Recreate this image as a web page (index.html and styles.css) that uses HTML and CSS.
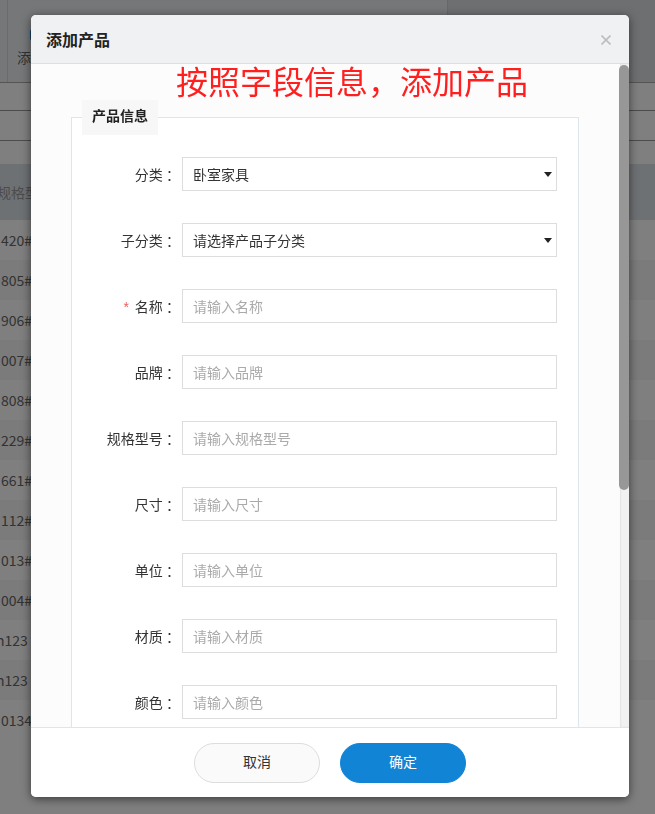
FILE: index.html
```html
<!DOCTYPE html>
<html>
<head>
    <meta charset="utf-8">
    <title>添加产品</title>
    <link rel="stylesheet" href="styles.css">
</head>
<body>
<div class="page">
    <div class="toolbar">
        <div class="tool-group">
            <div class="tool-btn"><span class="tool-icon"></span><span class="tool-text">添加</span></div>
        </div>
        <div class="tool-rest"></div>
    </div>
    <div class="tabs"></div>
    <div class="search"><div class="search-row"></div></div>
    <div class="grid">
        <div class="grid-head">规格型号</div>
        <div class="grid-row">420#</div>
        <div class="grid-row">805#</div>
        <div class="grid-row">906#</div>
        <div class="grid-row">007#</div>
        <div class="grid-row">808#</div>
        <div class="grid-row">229#</div>
        <div class="grid-row">661#</div>
        <div class="grid-row">112#</div>
        <div class="grid-row">013#</div>
        <div class="grid-row">004#</div>
        <div class="grid-row cut">n123</div>
        <div class="grid-row cut">n123</div>
        <div class="grid-row">0134</div>
    </div>
</div>

<div class="mask"></div>

<div class="dialog">
    <div class="dialog-head">
        <span class="dialog-title">添加产品</span>
        <span class="dialog-close">
            <svg width="10" height="10" viewBox="0 0 10 10"><path d="M0.5 0.5L9.5 9.5M9.5 0.5L0.5 9.5" stroke="#bdbdbd" stroke-width="1.6" fill="none"/></svg>
        </span>
    </div>
    <div class="dialog-body">
        <div class="body-view">
            <div class="tip">按照字段信息，添加产品</div>
            <fieldset class="group">
                <legend>产品信息</legend>
                <div class="form-item">
                    <label>分类 ：</label>
                    <div class="select"><select><option>卧室家具</option></select></div>
                </div>
                <div class="form-item">
                    <label>子分类 ：</label>
                    <div class="select"><select><option>请选择产品子分类</option></select></div>
                </div>
                <div class="form-item">
                    <label><i class="req">*</i>名称 ：</label>
                    <input type="text" placeholder="请输入名称">
                </div>
                <div class="form-item">
                    <label>品牌 ：</label>
                    <input type="text" placeholder="请输入品牌">
                </div>
                <div class="form-item">
                    <label>规格型号 ：</label>
                    <input type="text" placeholder="请输入规格型号">
                </div>
                <div class="form-item">
                    <label>尺寸 ：</label>
                    <input type="text" placeholder="请输入尺寸">
                </div>
                <div class="form-item">
                    <label>单位 ：</label>
                    <input type="text" placeholder="请输入单位">
                </div>
                <div class="form-item">
                    <label>材质 ：</label>
                    <input type="text" placeholder="请输入材质">
                </div>
                <div class="form-item">
                    <label>颜色 ：</label>
                    <input type="text" placeholder="请输入颜色">
                </div>
                <div class="form-item">
                    <label>产地 ：</label>
                    <input type="text" placeholder="请输入产地">
                </div>
                <div class="form-item">
                    <label>单价 ：</label>
                    <input type="text" placeholder="请输入单价">
                </div>
                <div class="form-item">
                    <label>备注 ：</label>
                    <input type="text" placeholder="请输入备注">
                </div>
            </fieldset>
        </div>
        <div class="scrollbar"><div class="scroll-thumb"></div></div>
    </div>
    <div class="dialog-foot">
        <button class="btn btn-cancel">取消</button>
        <button class="btn btn-ok">确定</button>
    </div>
</div>
</body>
</html>
```

FILE: styles.css
```css
body
{
    margin:0;
    width:655px;
    height:814px;
    overflow:hidden;
    font-family:"Noto Sans CJK SC", "Microsoft YaHei", sans-serif;
    font-size:14px;
    color:#333;
}

/* page under the mask */

.page
{
    width:655px;
    height:814px;
    background-color:#fff;
}

.toolbar
{
    display:flex;
    height:83px;
    box-sizing:border-box;
    border-bottom:1px solid #aaa;
    background-color:#eceef2;
}

.tool-group
{
    width:439px;
    margin-left:7px;
    border-left:1px solid #d4d6da;
    border-right:1px solid #cfd1d5;
}

.tool-btn
{
    display:flex;
    flex-direction:column;
    align-items:flex-start;
    padding-top:29px;
}

.tool-icon
{
    width:14px;
    height:12px;
    margin-left:22px;
    border-radius:3px;
    background-color:#2b7fd0;
}

.tool-text
{
    margin:6px 0 0 9px;
    color:#666;
    font-size:14px;
    line-height:20px;
}

.tool-rest
{
    flex:1;
    background-color:#dcdee2;
}

.tabs
{
    height:27px;
    border-bottom:1px solid #999;
}

.search
{
    height:53px;
}

.search-row
{
    height:29px;
    border-bottom:1px solid #999;
}

.grid-head
{
    height:56px;
    line-height:56px;
    background-color:#dde2e8;
    color:#999;
    text-indent:-3px;
    white-space:nowrap;
}

.grid-row
{
    height:40px;
    line-height:40px;
    padding-left:1px;
    color:#666;
}

.grid-row:nth-child(odd)
{
    background-color:#f6f6f6;
}

.grid-row.cut
{
    text-indent:-5px;
}

.mask
{
    position:fixed;
    left:0;
    top:0;
    right:0;
    bottom:0;
    background-color:rgba(0,0,0,0.5);
}

/* dialog */

.dialog
{
    position:absolute;
    left:31px;
    top:15px;
    width:598px;
    height:782px;
    display:flex;
    flex-direction:column;
    overflow:hidden;
    background-color:#fff;
    border-radius:5px;
    box-shadow:0 2px 10px rgba(0,0,0,0.55);
}

.dialog-head
{
    display:flex;
    align-items:center;
    justify-content:space-between;
    height:49px;
    box-sizing:border-box;
    padding:0 18px 0 15px;
    border-bottom:1px solid #dcdfe4;
    background-color:#f0f1f3;
    flex-shrink:0;
}

.dialog-title
{
    font-size:16px;
    font-weight:bold;
    color:#222;
}

.dialog-close
{
    display:flex;
    width:10px;
    height:10px;
    margin-top:1px;
}

.dialog-body
{
    flex:1;
    display:flex;
    min-height:0;
    background-color:#fcfcfc;
}

.body-view
{
    flex:1;
    overflow:hidden;
}

.scrollbar
{
    width:10px;
    flex-shrink:0;
    background-color:#f1f1f1;
    border-left:1px solid #fafafa;
    box-sizing:border-box;
    box-shadow:inset 1px 0 2px rgba(0,0,0,0.06);
}

.scroll-thumb
{
    height:425px;
    margin:1px 0 0 -1px;
    border-radius:5px;
    background-color:#979797;
}

.tip
{
    padding-left:145px;
    padding-bottom:4px;
    font-size:32px;
    line-height:32px;
    color:#ff1f1f;
}

fieldset.group
{
    margin:0 40px;
    padding:22px 0 30px 0;
    min-width:0;
    border:1px solid #dde5ef;
    background-color:#fff;
}

fieldset.group legend
{
    margin-left:10px;
    padding:0 10px 4px 10px;
    line-height:31px;
    background-color:#f7f7f7;
    font-weight:bold;
    color:#222;
}

.form-item
{
    display:flex;
    align-items:center;
    height:34px;
    margin-bottom:32px;
}

.form-item:last-child
{
    margin-bottom:0;
}

.form-item label
{
    width:108px;
    flex-shrink:0;
    text-align:right;
    color:#333;
    padding-bottom:1px;
}

.req
{
    font-style:normal;
    color:#f25a5a;
    margin-right:6px;
    font-family:"Liberation Sans", sans-serif;
}

.form-item input,
.form-item select
{
    width:375px;
    height:34px;
    box-sizing:border-box;
    padding:0 10px 1px 10px;
    border:1px solid #ddd;
    border-radius:0;
    background-color:#fff;
    font-family:inherit;
    font-size:14px;
    color:#333;
    outline:none;
}

.form-item input
{
    margin-left:2px;
}

.form-item input::placeholder
{
    color:#aaa;
}

.select
{
    position:relative;
    margin-left:2px;
    width:375px;
}

.select select
{
    display:block;
    -webkit-appearance:none;
    appearance:none;
}

.select::after
{
    content:"";
    position:absolute;
    right:5px;
    top:15px;
    border-left:4px solid transparent;
    border-right:4px solid transparent;
    border-top:5px solid #222;
}

.dialog-foot
{
    display:flex;
    align-items:center;
    justify-content:center;
    gap:20px;
    height:70px;
    box-sizing:border-box;
    border-top:1px solid #e4e4e4;
    background-color:#fff;
    flex-shrink:0;
}

.btn
{
    width:126px;
    height:40px;
    padding:0 0 3px 0;
    border-radius:20px;
    font-family:inherit;
    font-size:14px;
    cursor:pointer;
}

.btn-cancel
{
    border:1px solid #ddd;
    background-color:#fafafa;
    color:#333;
}

.btn-ok
{
    border:1px solid #1184d6;
    background-color:#1184d6;
    color:#fff;
}
```
